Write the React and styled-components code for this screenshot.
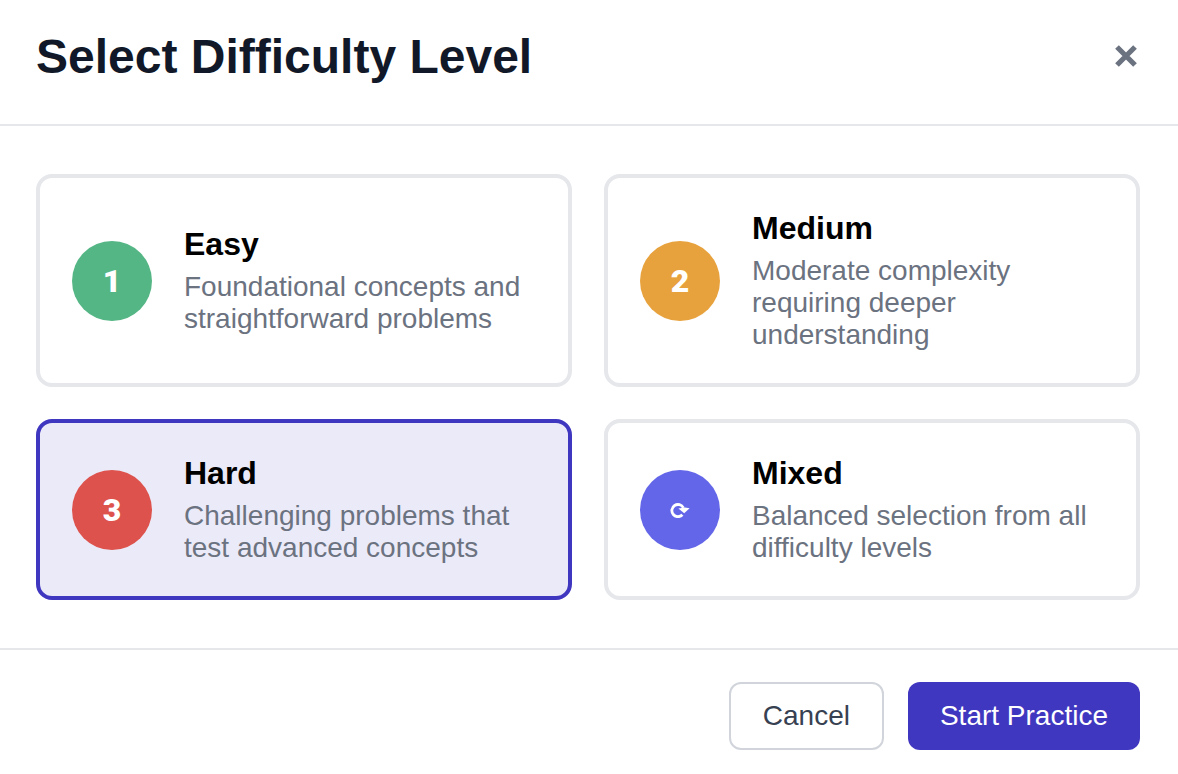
import React, { useState } from "react";
import styled, { createGlobalStyle } from "styled-components";

const GlobalStyle = createGlobalStyle`
  * {
    box-sizing: border-box;
  }

  body {
    margin: 0;
    background: #fff;
    font-family: "Liberation Sans", Arial, sans-serif;
  }

  button {
    font-family: inherit;
    cursor: pointer;
  }
`;

const levels = [
  {
    id: "easy",
    badge: "1",
    color: "#55b685",
    name: "Easy",
    text: "Foundational concepts and straightforward problems"
  },
  {
    id: "medium",
    badge: "2",
    color: "#e8a23d",
    name: "Medium",
    text: "Moderate complexity requiring deeper understanding"
  },
  {
    id: "hard",
    badge: "3",
    color: "#dd524c",
    name: "Hard",
    text: "Challenging problems that test advanced concepts"
  },
  {
    id: "mixed",
    color: "#6366e8",
    name: "Mixed",
    text: "Balanced selection from all difficulty levels"
  }
];

const Modal = styled.form`
  display: flex;
  flex-direction: column;
`;

const Header = styled.header`
  display: flex;
  align-items: flex-start;
  justify-content: space-between;
  padding: 28px 36px 38px;
  border-bottom: 2px solid #e5e7eb;
`;

const Title = styled.h1`
  margin: 0;
  font-size: 48px;
  line-height: 58px;
  color: #111827;
`;

const CloseButton = styled.button`
  display: flex;
  padding: 16px 4px;
  border: 0;
  background: none;
  color: #6b7280;
`;

const Levels = styled.fieldset`
  display: grid;
  grid-template-columns: 1fr 1fr;
  gap: 32px;
  min-width: 0;
  margin: 0;
  padding: 48px 38px 48px 36px;
  border: 0;
`;

const Card = styled.label`
  display: flex;
  align-items: center;
  gap: 32px;
  padding: 32px;
  border: 4px solid ${props => (props.$selected ? "#4037c0" : "#e5e7eb")};
  border-radius: 16px;
  background: ${props => (props.$selected ? "#ebeaf8" : "#fff")};
  cursor: pointer;
`;

/* the card itself shows the state */
const Radio = styled.input`
  position: absolute;
  opacity: 0;
  pointer-events: none;
`;

const Badge = styled.span`
  display: flex;
  flex: none;
  align-items: center;
  justify-content: center;
  width: 80px;
  height: 80px;
  border-radius: 50%;
  background: ${props => props.$color};
  color: #fff;
  font-family: Roboto, "Liberation Sans", sans-serif;
  font-size: 32px;
  font-weight: 900;
  line-height: 36px;
`;

const CardBody = styled.span`
  display: flex;
  flex: 1;
  flex-direction: column;
  gap: 8px;
`;

const CardTitle = styled.span`
  font-size: 32px;
  font-weight: 700;
  line-height: 37px;
  color: #000;
`;

const CardText = styled.span`
  font-size: 28px;
  line-height: 32px;
  color: #6b7280;
`;

const Footer = styled.footer`
  display: flex;
  justify-content: flex-end;
  gap: 24px;
  padding: 32px 38px 24px;
  border-top: 2px solid #e5e7eb;
`;

const Button = styled.button`
  height: 68px;
  padding: 0 32px;
  border: ${props => (props.$primary ? "0" : "2px solid #d1d5db")};
  border-radius: 12px;
  background: ${props => (props.$primary ? "#4037c0" : "#fff")};
  color: ${props => (props.$primary ? "#fff" : "#374151")};
  font-size: 28px;
  line-height: 32px;
`;

const CloseIcon = () => (
  <svg width="24" height="24" viewBox="0 0 24 24" fill="none" aria-hidden="true">
    <path
      d="M3 3L21 21M21 3L3 21"
      stroke="currentColor"
      strokeWidth="5.2"
    />
  </svg>
);

const CycleIcon = () => (
  <svg width="20" height="16" viewBox="0 0 20 16" fill="none" aria-hidden="true">
    <path
      d="M12.4 12.8A6.1 6.1 0 1 1 13.4 5.8"
      stroke="currentColor"
      strokeWidth="2.8"
    />
    <path d="M8.4 6.4L15 5.6L19.6 6.2L14.2 11.2Z" fill="currentColor" />
  </svg>
);

export default function App() {
  const [selected, setSelected] = useState("hard");

  return (
    <>
      <GlobalStyle />
      <Modal onSubmit={e => e.preventDefault()}>
        <Header>
          <Title>Select Difficulty Level</Title>
          <CloseButton type="button" aria-label="Close">
            <CloseIcon />
          </CloseButton>
        </Header>

        <Levels aria-label="Difficulty level">
          {levels.map(level => (
            <Card key={level.id} $selected={selected === level.id}>
              <Radio
                type="radio"
                name="level"
                value={level.id}
                checked={selected === level.id}
                onChange={() => setSelected(level.id)}
              />
              <Badge $color={level.color}>{level.badge || <CycleIcon />}</Badge>
              <CardBody>
                <CardTitle>{level.name}</CardTitle>
                <CardText>{level.text}</CardText>
              </CardBody>
            </Card>
          ))}
        </Levels>

        <Footer>
          <Button type="button">Cancel</Button>
          <Button type="submit" $primary>
            Start Practice
          </Button>
        </Footer>
      </Modal>
    </>
  );
}
